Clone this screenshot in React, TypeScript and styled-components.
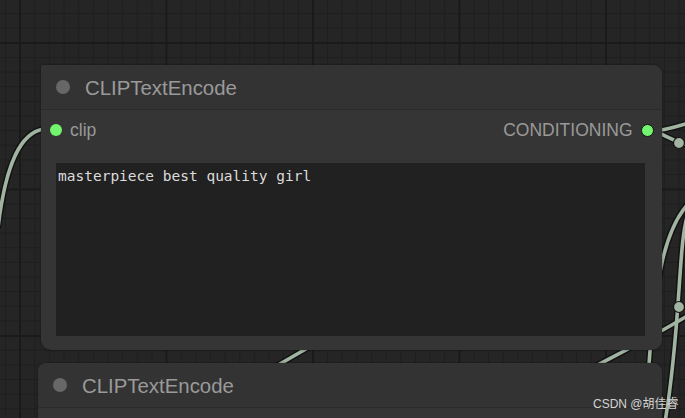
import React from "react";
import styled, { createGlobalStyle } from "styled-components";

const GlobalStyle = createGlobalStyle`
  html, body { margin: 0; padding: 0; background: #242424; overflow: hidden; }
  #root { width: 685px; height: 418px; }
`;

const Canvas = styled.div`
  position: relative;
  width: 685px;
  height: 418px;
  overflow: hidden;
  background-color: #252525;
  background-image:
    linear-gradient(to right, #1a1a1a 0 2px, transparent 2px),
    linear-gradient(to bottom, #1a1a1a 0 2px, transparent 2px),
    linear-gradient(to right, #1e1e1e 0 1px, transparent 1px),
    linear-gradient(to bottom, #1e1e1e 0 1px, transparent 1px);
  background-size: 146.5px 146.5px, 146.5px 146.5px, 14.65px 14.65px, 14.65px 14.65px;
  background-position: 19px 0, 0 42px, 5px 0, 0 13px;
`;

const WireLayer = styled.svg`
  position: absolute;
  inset: 0;
  width: 685px;
  height: 418px;
  z-index: 0;
`;

const Node = styled.div<{ $x: number; $y: number; $w: number; $h: number; $tl: number }>`
  position: absolute;
  z-index: 1;
  left: ${(p) => p.$x}px;
  top: ${(p) => p.$y}px;
  width: ${(p) => p.$w}px;
  height: ${(p) => p.$h}px;
  background: #353535;
  border-radius: ${(p) => p.$tl}px 9px 10px 10px;
  box-shadow: 0 0 2px rgba(0, 0, 0, 0.55);
  display: flex;
  flex-direction: column;
  font-family: "Liberation Sans", Arial, sans-serif;
  overflow: visible;
`;

const TitleBar = styled.div`
  height: 44px;
  flex: none;
  display: flex;
  align-items: center;
  gap: 15px;
  padding-left: 15px;
  border-bottom: 1px solid #2b2b2b;
  background: #333333;
  border-radius: inherit;
  border-bottom-left-radius: 0;
  border-bottom-right-radius: 0;
`;

const TitleDot = styled.span`
  width: 14px;
  height: 14px;
  border-radius: 50%;
  background: #676767;
  flex: none;
`;

const TitleText = styled.span`
  font-size: 20.4px;
  color: #9a9a9a;
  line-height: 1;
  padding-top: 2px;
`;

const Body = styled.div`
  flex: 1;
  display: flex;
  flex-direction: column;
  padding: 0 17px 14px 15px;
  min-height: 0;
`;

const SlotRow = styled.div`
  height: 40px;
  flex: none;
  display: flex;
  align-items: center;
  justify-content: space-between;
  margin-bottom: 13px;
`;

const Slot = styled.div<{ $side: "in" | "out" }>`
  display: flex;
  align-items: center;
  gap: 8px;
  font-size: 17.5px;
  color: #999999;
  margin-left: ${(p) => (p.$side === "in" ? "-6px" : "0")};
  margin-right: ${(p) => (p.$side === "out" ? "-8.5px" : "0")};
`;

const SlotDot = styled.span<{ $outlined?: boolean }>`
  width: ${(p) => (p.$outlined ? 13 : 12)}px;
  height: ${(p) => (p.$outlined ? 13 : 12)}px;
  box-sizing: border-box;
  border-radius: 50%;
  background: #72f46e;
  border: ${(p) => (p.$outlined ? "1.6px solid #111" : "none")};
  flex: none;
`;

const TextBox = styled.div`
  flex: 1;
  background: #212121;
  padding: 5px 2px 4px;
  font-family: "DejaVu Sans Mono", "Liberation Mono", monospace;
  font-size: 14.5px;
  color: #dcdcdc;
  white-space: pre;
`;

const Watermark = styled.div`
  position: absolute;
  z-index: 2;
  left: 593px;
  top: 396px;
  font-family: "Liberation Sans", Arial, "Noto Sans CJK SC", sans-serif;
  font-size: 12px;
  line-height: 16px;
  color: #d4d4d4;
  white-space: nowrap;
`;

const wires = [
  "M 44 129 C 22 132, 6 160, -2 228",
  "M 654 131 C 666 130, 676 127, 692 122",
  "M 654 131 C 664 134, 671 141, 692 146",
  "M 692 200 C 668 222, 652 268, 646 420",
  "M 688 214 C 678 240, 681 330, 665 422",
  "M 560 386 C 600 362, 650 340, 700 308",
  "M 266 372 L 318 342",
];

const dots: [number, number][] = [
  [679, 143],
  [679, 307],
];

function Wires() {
  return (
    <WireLayer viewBox="0 0 685 418">
      {wires.map((d, i) => (
        <path key={"o" + i} d={d} fill="none" stroke="#121212" strokeWidth={6.5} />
      ))}
      {wires.map((d, i) => (
        <path key={"l" + i} d={d} fill="none" stroke="#a1b3a1" strokeWidth={3.6} />
      ))}
      {dots.map(([x, y], i) => (
        <circle key={i} cx={x} cy={y} r={5.5} fill="#a1b3a1" stroke="#121212" strokeWidth={1.2} />
      ))}
    </WireLayer>
  );
}

export default function App() {
  return (
    <>
      <GlobalStyle />
      <Canvas>
        <Wires />
        <Node $x={41} $y={65} $w={621} $h={285} $tl={2}>
          <TitleBar>
            <TitleDot />
            <TitleText>CLIPTextEncode</TitleText>
          </TitleBar>
          <Body>
            <SlotRow>
              <Slot $side="in">
                <SlotDot />
                <span>clip</span>
              </Slot>
              <Slot $side="out">
                <span>CONDITIONING</span>
                <SlotDot $outlined />
              </Slot>
            </SlotRow>
            <TextBox>masterpiece best quality girl</TextBox>
          </Body>
        </Node>
        <Node $x={38} $y={363} $w={624} $h={120} $tl={8}>
          <TitleBar>
            <TitleDot />
            <TitleText>CLIPTextEncode</TitleText>
          </TitleBar>
        </Node>
        <Watermark>CSDN @胡佳睿</Watermark>
      </Canvas>
    </>
  );
}
